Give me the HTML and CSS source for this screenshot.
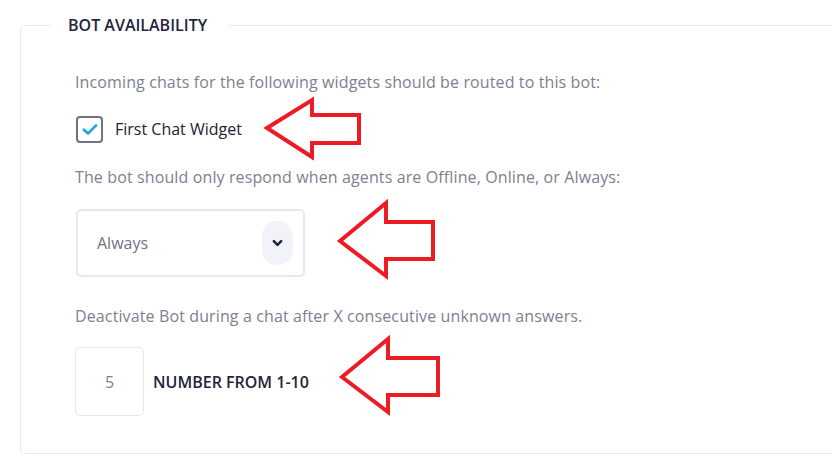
FILE: index.html
```html
<!DOCTYPE html>
<html>
<head>
<meta charset="utf-8">
<link rel="stylesheet" href="styles.css">
</head>
<body>
<div class="page">
  <fieldset class="panel">
    <legend class="panel-title">BOT AVAILABILITY</legend>
    <div class="panel-body">
      <p class="hint hint-first">Incoming chats for the following widgets should be routed to this bot:</p>
      <label class="check-row">
        <span class="checkbox">
          <svg viewBox="0 0 16 16" width="18" height="18"><path d="M2.6 8.6 L6.2 12 L13.4 4.8" fill="none" stroke="#1ea5ea" stroke-width="2.4" stroke-linecap="round" stroke-linejoin="round"/></svg>
        </span>
        <span class="check-label">First Chat Widget</span>
      </label>
      <p class="hint hint-second">The bot should only respond when agents are Offline, Online, or Always:</p>
      <div class="select">
        <span class="select-value">Always</span>
        <span class="select-btn">
          <svg viewBox="0 0 12 8" width="11" height="8"><path d="M2 2 L6 6 L10 2" fill="none" stroke="#1f2340" stroke-width="2.8" stroke-linecap="round" stroke-linejoin="round"/></svg>
        </span>
      </div>
      <p class="hint hint-third">Deactivate Bot during a chat after X consecutive unknown answers.</p>
      <div class="number-row">
        <span class="number-box">5</span>
        <span class="number-label">NUMBER FROM 1-10</span>
      </div>
    </div>
  </fieldset>
  <svg class="annotations" width="832" height="464" viewBox="0 0 832 464">
    <g fill="none" stroke="#ed1c24" stroke-width="4" stroke-linejoin="miter">
      <polygon points="267,128 312,100 312,115 359,115 359,143 312,143 312,157"/>
      <polygon points="340,241 386,203 386,222 433,222 433,259 386,259 386,276"/>
      <polygon points="342,377 388,339 388,358 438,358 438,395 388,395 388,412"/>
    </g>
  </svg>
</div>
</body>
</html>
```
FILE: styles.css
```css
html, body {
  margin: 0;
  padding: 0;
  background: #ffffff;
  overflow: hidden;
}
body {
  font-family: "Open Sans", "Noto Sans", sans-serif;
  width: 832px;
  height: 464px;
}
.page {
  position: relative;
  width: 832px;
  height: 464px;
  padding-top: 13px;
  box-sizing: border-box;
  overflow: hidden;
}
.panel {
  margin: 0 0 0 20px;
  width: 900px;
  padding: 0 0 37px 0;
  border: 1px solid #e8e8f2;
  border-radius: 5px;
  box-sizing: border-box;
}
.panel-title {
  margin-left: 29px;
  padding: 0 22px 0 18px;
  font-size: 16px;
  line-height: 24px;
  font-weight: 600;
  color: #23253a;
}
.panel-body {
  padding-left: 54px;
}
.hint {
  margin: 0;
  font-size: 16px;
  line-height: 22px;
  color: #7d8091;
  letter-spacing: 0.12px;
}
.hint-first { margin-top: 34px; }
.hint-second { margin-top: 24px; }
.hint-third { margin-top: 28px; }
.check-row {
  display: flex;
  align-items: center;
  gap: 12px;
  margin-top: 23px;
  height: 26px;
  padding-left: 1px;
}
.checkbox {
  width: 27px;
  height: 27px;
  box-sizing: border-box;
  border: 2px solid #6e7284;
  border-radius: 4px;
  display: flex;
  align-items: center;
  justify-content: center;
}
.check-label {
  font-size: 16px;
  color: #1f2233;
}
.select {
  margin-top: 21px;
  margin-left: 1px;
  width: 229px;
  height: 68px;
  box-sizing: border-box;
  border: 2px solid #e6e7f4;
  border-radius: 5px;
  display: flex;
  align-items: center;
  justify-content: space-between;
  padding: 0 10px 0 19px;
}
.select-value {
  font-size: 16px;
  color: #6f7384;
}
.select-btn {
  width: 31px;
  height: 44px;
  border-radius: 15px;
  background: #f2f2f9;
  display: flex;
  align-items: center;
  justify-content: center;
}
.number-row {
  margin-top: 20px;
  display: flex;
  align-items: center;
  gap: 9px;
}
.number-box {
  width: 69px;
  height: 69px;
  box-sizing: border-box;
  border: 1px solid #e8e8f4;
  border-radius: 5px;
  display: flex;
  align-items: center;
  justify-content: center;
  font-size: 16px;
  color: #7d8091;
}
.number-label {
  font-size: 16px;
  font-weight: 600;
  color: #23253a;
}
.annotations {
  position: absolute;
  left: 0;
  top: 0;
  pointer-events: none;
}
```
